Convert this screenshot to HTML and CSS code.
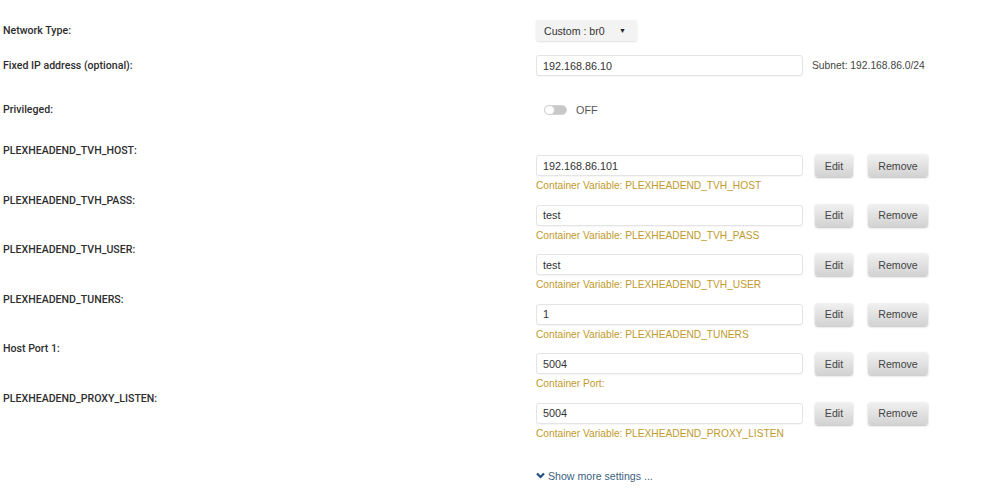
FILE: index.html
```html
<!DOCTYPE html>
<html lang="en">
<head>
    <meta charset="UTF-8">
    <meta name="viewport" content="width=device-width, initial-scale=1.0">
    <title>Docker Container Settings</title>
    <link rel="stylesheet" href="styles.css">
</head>
<body>
    <div class="settings">
        <div class="row row-top">
            <div class="label">Network Type:</div>
            <div class="control">
                <div class="select">
                    <span>Custom : br0</span>
                    <span class="arrow">&#9660;</span>
                </div>
            </div>
        </div>
        <div class="row row-ip">
            <div class="label">Fixed IP address (optional):</div>
            <div class="control">
                <input class="text-input" type="text" value="192.168.86.10" readonly>
                <span class="subnet">Subnet: 192.168.86.0/24</span>
            </div>
        </div>
        <div class="row row-priv">
            <div class="label">Privileged:</div>
            <div class="control">
                <div class="switch"><span class="knob"></span></div>
                <span class="switch-text">OFF</span>
            </div>
        </div>

        <div id="varList"></div>

        <div class="row row-more">
            <div></div>
            <a class="show-more" href="#">
                <svg width="9" height="7" viewBox="0 0 9 7"><path d="M1 1.5 L4.5 5 L8 1.5" fill="none" stroke="#1d4f80" stroke-width="2.2"/></svg>
                Show more settings ...
            </a>
        </div>
    </div>

    <script>
        // Container config entries
        const vars = [
            { name: "PLEXHEADEND_TVH_HOST", value: "192.168.86.101", note: "Container Variable: PLEXHEADEND_TVH_HOST" },
            { name: "PLEXHEADEND_TVH_PASS", value: "test", note: "Container Variable: PLEXHEADEND_TVH_PASS" },
            { name: "PLEXHEADEND_TVH_USER", value: "test", note: "Container Variable: PLEXHEADEND_TVH_USER" },
            { name: "PLEXHEADEND_TUNERS", value: "1", note: "Container Variable: PLEXHEADEND_TUNERS" },
            { name: "Host Port 1", value: "5004", note: "Container Port:" },
            { name: "PLEXHEADEND_PROXY_LISTEN", value: "5004", note: "Container Variable: PLEXHEADEND_PROXY_LISTEN" }
        ];

        function renderVars() {
            const list = document.getElementById('varList');
            vars.forEach(v => {
                const row = document.createElement('div');
                row.className = 'row var-row';
                row.innerHTML = `
                    <div class="label">${v.name}:</div>
                    <div class="var-control">
                        <div class="var-line">
                            <input class="text-input" type="text" value="${v.value}" readonly>
                            <button class="btn btn-edit">Edit</button>
                            <button class="btn btn-remove">Remove</button>
                        </div>
                        <div class="note">${v.note}</div>
                    </div>
                `;
                list.appendChild(row);
            });
        }

        renderVars();
    </script>
</body>
</html>
```

FILE: styles.css
```css
body {
    margin: 0;
    padding: 0 0 0 3px;
    background: #ffffff;
    font-family: "Liberation Sans", Arial, sans-serif;
    font-size: 11px;
    color: #333333;
}
.row {
    display: grid;
    grid-template-columns: 533px 1fr;
}
.label {
    font-family: Roboto, "Liberation Sans", sans-serif;
    font-weight: 500;
    font-size: 10.6px;
    line-height: 12px;
    color: #2e2e2e;
    align-self: center;
}
.control {
    display: flex;
    align-items: center;
}
.row-top {
    margin-top: 20px;
    height: 21px;
}
.row-ip {
    margin-top: 14px;
    height: 21px;
}
.row-priv {
    margin-top: 24px;
    height: 20px;
}
.select {
    width: 101px;
    height: 21px;
    box-sizing: border-box;
    padding: 0 8px;
    background: #f3f3f3;
    border-radius: 2px;
    box-shadow: 0 1px 2px rgba(0, 0, 0, 0.12);
    display: flex;
    align-items: center;
    justify-content: space-between;
    color: #333333;
    font-size: 10.6px;
}
.select .arrow {
    font-size: 7px;
    color: #222222;
    margin-right: 3px;
}
.text-input {
    width: 267px;
    height: 21px;
    box-sizing: border-box;
    padding: 0 6px;
    border: 1px solid #e4e4e4;
    border-radius: 3px;
    box-shadow: 0 1px 1px rgba(0, 0, 0, 0.04);
    font-family: "Liberation Sans", Arial, sans-serif;
    font-size: 10.8px;
    color: #333333;
    background: #ffffff;
    outline: none;
}
.subnet {
    margin-left: 9px;
    color: #444444;
    font-size: 10.3px;
}
.switch {
    margin-left: 8px;
    width: 23px;
    height: 10px;
    border-radius: 5px;
    background: #c8c8c8;
    border: 1px solid #d4d4d4;
    box-sizing: border-box;
    position: relative;
}
.knob {
    position: absolute;
    left: -1px;
    top: -1px;
    width: 11px;
    height: 10px;
    border-radius: 5px;
    background: #ffffff;
    border: 1px solid #cfcfcf;
    box-sizing: border-box;
}
.switch-text {
    margin-left: 9px;
    color: #555555;
    font-size: 10.8px;
}
#varList {
    margin-top: 24px;
}
.var-row {
    height: 49.6px;
    align-items: start;
}
.var-row .label {
    align-self: start;
    padding-top: 1px;
}
.var-control {
    padding-top: 10px;
}
.var-line {
    display: flex;
    align-items: center;
}
.btn {
    height: 23px;
    box-sizing: border-box;
    border: none;
    border-radius: 3px;
    background: linear-gradient(to bottom, #f1f1f1, #d2d2d2);
    box-shadow: 0 1px 2px rgba(0, 0, 0, 0.25);
    font-family: "Liberation Sans", Arial, sans-serif;
    font-size: 10.6px;
    color: #444444;
    padding: 0;
    cursor: pointer;
}
.btn-edit {
    width: 38px;
    margin-left: 12px;
}
.btn-remove {
    width: 60px;
    margin-left: 15px;
}
.note {
    margin-top: 2px;
    line-height: 13px;
    color: #bf9a2c;
    font-size: 10.2px;
}
.row-more {
    margin-top: 27px;
}
.show-more {
    display: flex;
    align-items: center;
    gap: 3px;
    color: #3d5f80;
    text-decoration: none;
    font-size: 10.6px;
    line-height: 14px;
}
```
